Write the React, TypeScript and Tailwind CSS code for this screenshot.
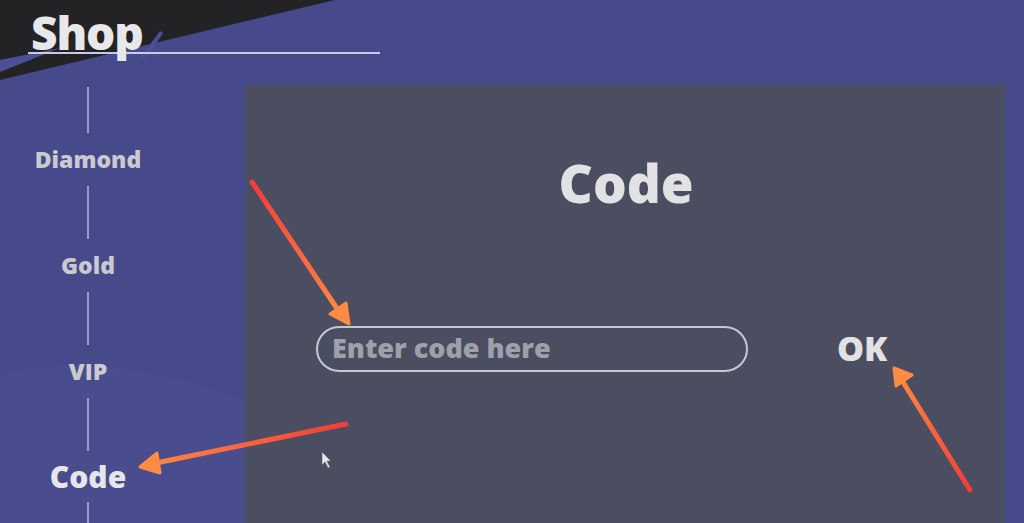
import React from 'react';

const font = { fontFamily: '"Open Sans", "Noto Sans", sans-serif' };

const Segment = ({ h }: { h: string }) => <div className={`w-[2px] bg-[#b9bde0]/70 ${h}`} />;

const NavItem = ({ label, active }: { label: string; active?: boolean }) => (
  <div
    className={`flex items-center justify-center font-extrabold ${
      active ? 'h-[51px] text-[30px] text-[#e6e6ea]' : 'h-[53px] text-[23px] text-[#c9c9cf]'
    }`}
  >
    {label}
  </div>
);

const App: React.FC = () => {
  return (
    <div className="relative w-[1024px] h-[523px] overflow-hidden bg-[#464a8b]" style={font}>
      {/* dark corner behind the title */}
      <svg className="absolute inset-0 pointer-events-none" width="1024" height="523">
        <polygon points="0,0 335,0 0,80" fill="#232325" />
        <polygon points="0,60 60,48 0,72" fill="#4b4f94" />
        <polygon points="140,58 160,31 163,33 147,58" fill="#4b4f94" />
        <path d="M0 375 C 80 355, 160 370, 245 400 L 245 523 L 0 523 Z" fill="#4c5192" opacity="0.55" />
      </svg>

      <div className="relative flex flex-col h-full">
        <header className="h-[87px] pl-[31px] pt-[12px]">
          <h1 className="text-[46px] leading-[40px] font-extrabold text-[#e8e8ea] tracking-tight">Shop</h1>
          <div className="ml-[-3px] w-[352px] h-[2px] bg-[#c9cbe6]" />
        </header>

        <div className="flex flex-1 min-h-0">
          <nav className="w-[176px] flex flex-col items-center">
            <Segment h="h-[46px]" />
            <NavItem label="Diamond" />
            <Segment h="h-[53px]" />
            <NavItem label="Gold" />
            <Segment h="h-[53px]" />
            <NavItem label="VIP" />
            <Segment h="h-[53px]" />
            <NavItem label="Code" active />
            <Segment h="flex-1" />
          </nav>

          <main className="ml-[69px] mr-[19px] mt-[-2px] flex-1 bg-[#4a4e60] flex flex-col items-center">
            <h2 className="mt-[67px] text-[53px] leading-[62px] font-extrabold text-[#e2e2e4] pl-[2px]">Code</h2>
            <div className="mt-[109px] w-full flex items-center pl-[71px]">
              <div className="w-[432px] h-[46px] rounded-full border-2 border-[#c4c7d4] flex items-center pl-[14px]">
                <input
                  className="bg-transparent outline-none w-full text-[27px] font-extrabold text-[#e2e2e4] placeholder:text-[#9ea1ab]"
                  placeholder="Enter code here"
                />
              </div>
              <button className="ml-[89px] text-[34px] font-extrabold text-[#e2e2e4]">OK</button>
            </div>
          </main>
        </div>
      </div>

      {/* annotation arrows */}
      <svg className="absolute inset-0 pointer-events-none" width="1024" height="523">
        <defs>
          <linearGradient id="a1" x1="252" y1="182" x2="345" y2="320" gradientUnits="userSpaceOnUse">
            <stop offset="0" stopColor="#f23c3a" />
            <stop offset="1" stopColor="#ff8c42" />
          </linearGradient>
          <linearGradient id="a2" x1="346" y1="424" x2="140" y2="467" gradientUnits="userSpaceOnUse">
            <stop offset="0" stopColor="#f23c3a" />
            <stop offset="1" stopColor="#ff8c42" />
          </linearGradient>
          <linearGradient id="a3" x1="970" y1="490" x2="895" y2="370" gradientUnits="userSpaceOnUse">
            <stop offset="0" stopColor="#f23c3a" />
            <stop offset="1" stopColor="#ff8c42" />
          </linearGradient>
        </defs>
        <line x1="252" y1="182" x2="336" y2="307" stroke="url(#a1)" strokeWidth="5" strokeLinecap="round" />
        <polygon points="349,324 330,314 346,303" fill="#ff8c42" stroke="#ff8c42" strokeWidth="3" strokeLinejoin="round" />
        <line x1="346" y1="424" x2="156" y2="463" stroke="url(#a2)" strokeWidth="5" strokeLinecap="round" />
        <polygon points="140,467 157,453 160,473" fill="#ff8c42" stroke="#ff8c42" strokeWidth="3" strokeLinejoin="round" />
        <line x1="970" y1="490" x2="903" y2="382" stroke="url(#a3)" strokeWidth="5" strokeLinecap="round" />
        <polygon points="894,368 912,375 896,386" fill="#ff8c42" stroke="#ff8c42" strokeWidth="3" strokeLinejoin="round" />
        <path d="M322 452 L322 465 L325 462 L328 468 L330 467 L327 461 L331 461 Z" fill="#e6e6ea" stroke="#555" strokeWidth="0.5" />
      </svg>
    </div>
  );
};

export default App;
